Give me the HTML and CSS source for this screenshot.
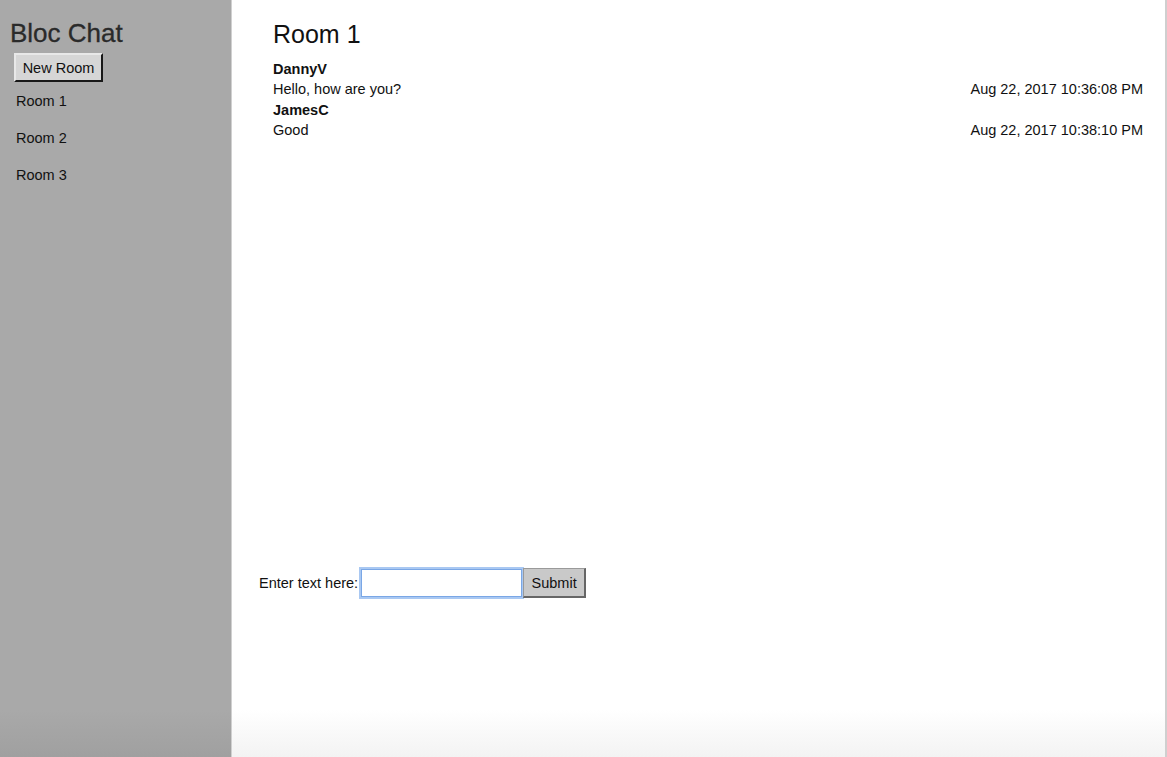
FILE: index.html
```html
<!DOCTYPE html>
<html>
<head>
<meta charset="utf-8">
<link rel="stylesheet" href="styles.css">
</head>
<body>
<div class="app">
  <aside class="sidebar">
    <h1 class="brand">Bloc Chat</h1>
    <button class="new-room">New Room</button>
    <ul class="rooms">
      <li>Room 1</li>
      <li>Room 2</li>
      <li>Room 3</li>
    </ul>
  </aside>
  <main class="main">
    <h2 class="room-title">Room 1</h2>
    <div class="messages">
      <div class="msg">
        <div class="user">DannyV</div>
        <div class="row"><span>Hello, how are you?</span><span>Aug 22, 2017 10:36:08 PM</span></div>
      </div>
      <div class="msg">
        <div class="user">JamesC</div>
        <div class="row"><span>Good</span><span>Aug 22, 2017 10:38:10 PM</span></div>
      </div>
    </div>
    <form class="composer">
      <label>Enter text here:</label>
      <input type="text" class="text-input">
      <button type="button" class="submit">Submit</button>
    </form>
  </main>
</div>
</body>
</html>
```
FILE: styles.css
```css
html, body {
  margin: 0;
  padding: 0;
  height: 100%;
}
body {
  font-family: "Liberation Sans", Arial, sans-serif;
  font-size: 14.5px;
  color: #111;
  background: #fff;
}
.app {
  display: flex;
  height: 757px;
}
.sidebar {
  width: 232px;
  flex: none;
  background: linear-gradient(#a9a9a9 0, #a9a9a9 710px, #a0a0a0 757px);
  border-right: 1px solid #d0d0d0;
  padding: 19px 0 0 10px;
  box-sizing: border-box;
}
.brand {
  margin: 0;
  font-size: 26px;
  font-weight: normal;
  color: #2a2a2a;
  line-height: 28px;
  -webkit-text-stroke: 0.3px #2a2a2a;
}
.new-room {
  margin: 6px 0 0 4px;
  height: 29px;
  width: 89px;
  padding: 0;
  font-family: inherit;
  font-size: 14.5px;
  color: #111;
  background: #d6d6d6;
  border: 2px outset #e8e8e8;
  border-right-color: #6d6d6d;
  border-bottom-color: #6d6d6d;
}
.rooms {
  list-style: none;
  margin: 9px 0 0 6px;
  padding: 0;
}
.rooms li {
  height: 37px;
  line-height: 20px;
  color: #111;
}
.main {
  flex: 1;
  display: flex;
  flex-direction: column;
  padding: 0 22px 0 41px;
  background: linear-gradient(#fff 0, #fff 710px, #f3f3f3 757px);
  border-right: 2px solid #cfcfcf;
}
.room-title {
  margin: 20px 0 0;
  font-size: 25px;
  font-weight: normal;
  line-height: 28px;
  color: #111;
}
.messages {
  margin-top: 11px;
}
.user {
  font-weight: bold;
  line-height: 20px;
}
.row {
  display: flex;
  justify-content: space-between;
  line-height: 21px;
}
.composer {
  margin: 427px 0 0 -14px;
  display: flex;
  align-items: center;
}
.composer label {
  margin-right: 3px;
}
.text-input {
  width: 159px;
  height: 26px;
  margin: 0;
  padding: 0;
  border: 1px solid #7aa7e6;
  box-shadow: 0 0 0 2px #a9c8f2;
  outline: none;
  font-family: inherit;
  font-size: 14.5px;
  box-sizing: content-box;
}
.submit {
  margin-left: 1px;
  height: 30px;
  width: 63px;
  padding: 0;
  font-family: inherit;
  font-size: 14.5px;
  color: #111;
  background: #c9c9c9;
  border: 1px solid #9a9a9a;
  border-right: 2px solid #666;
  border-bottom: 2px solid #666;
}
```
